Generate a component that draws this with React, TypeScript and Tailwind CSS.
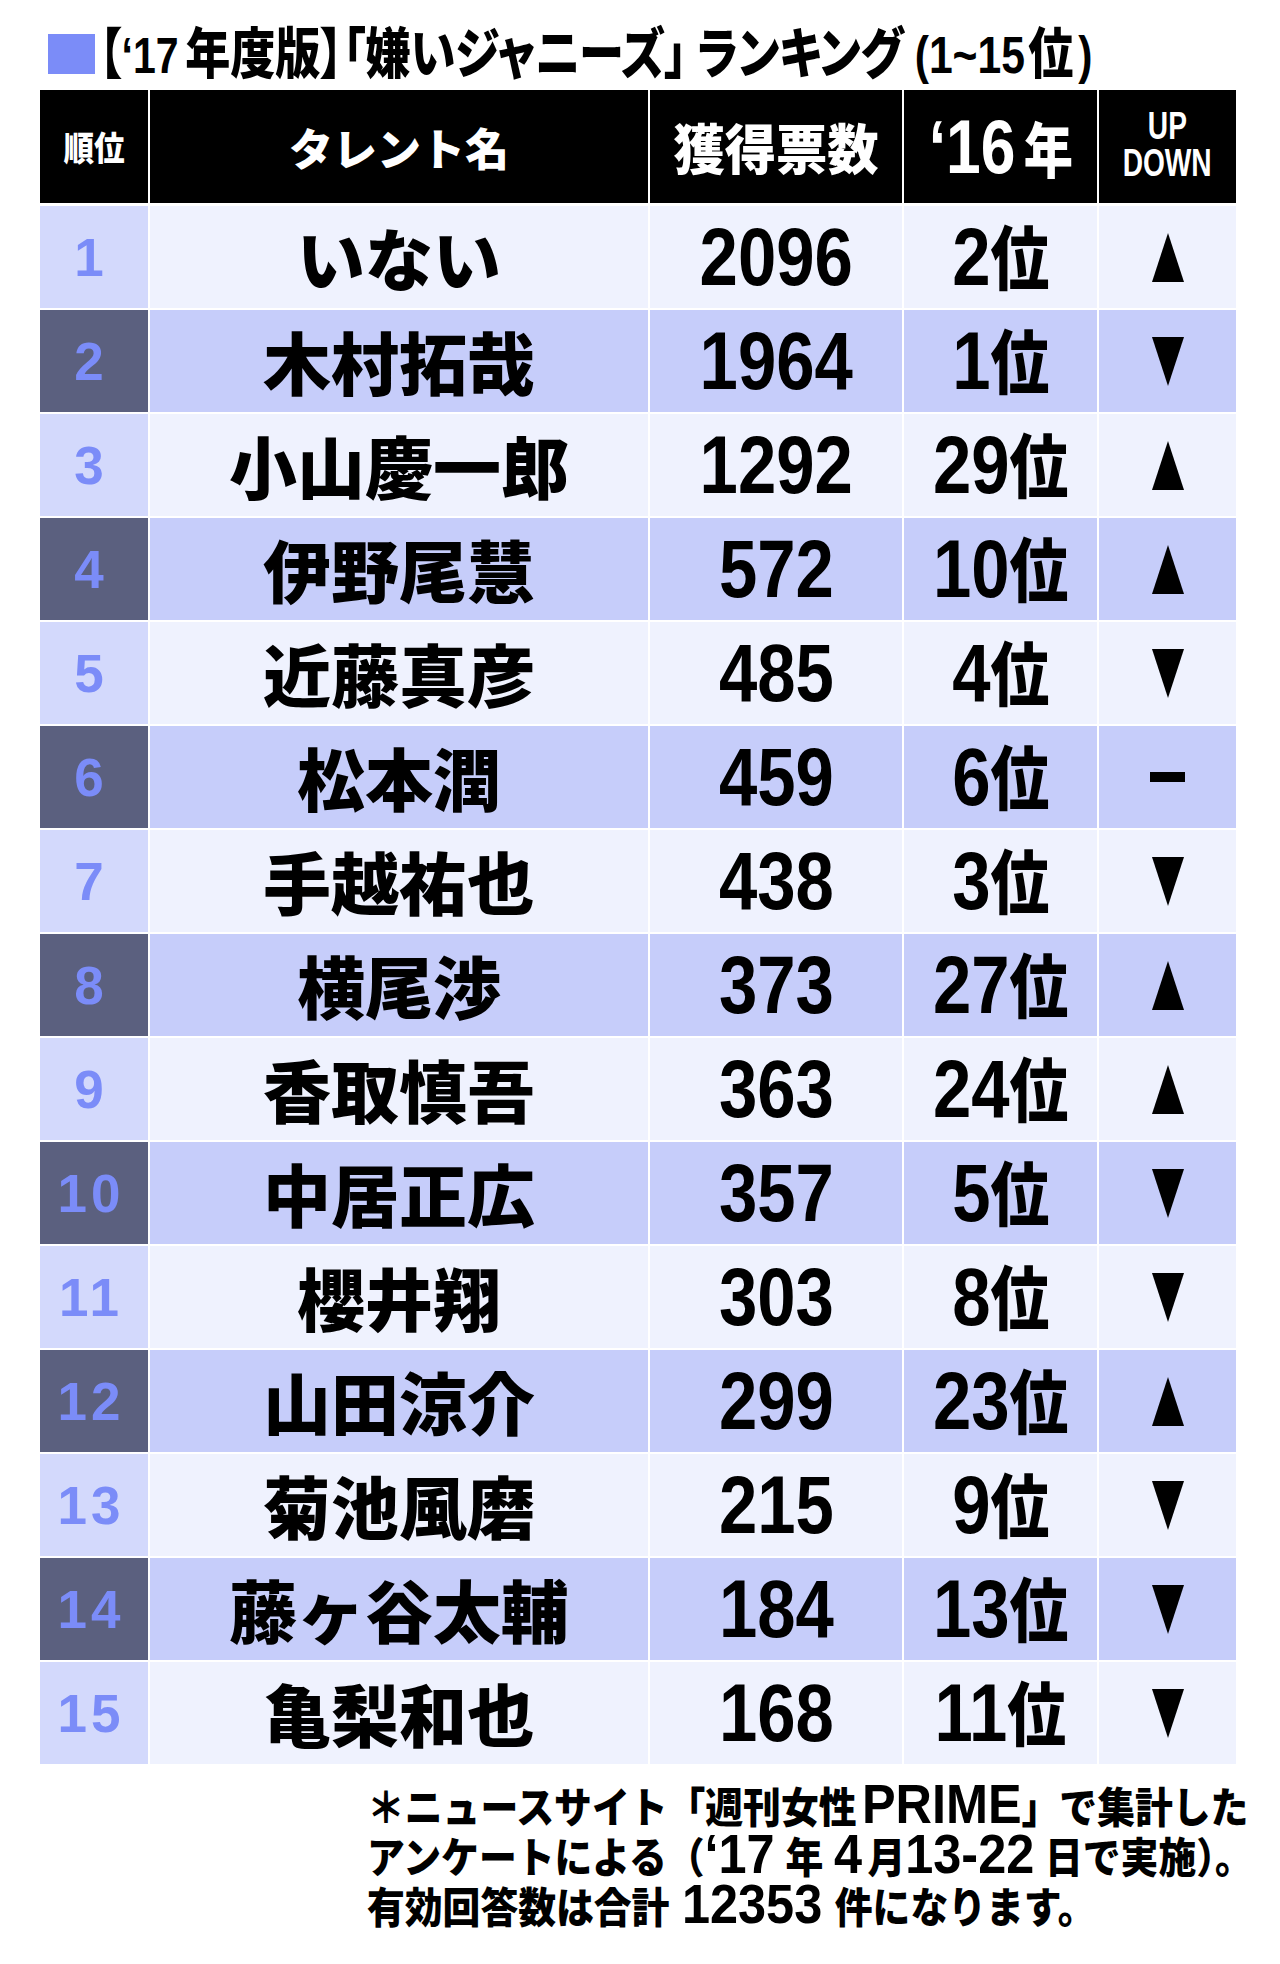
const jp = "font-['Noto_Sans_CJK_JP',sans-serif] font-black";
const lat = "font-['Liberation_Sans',sans-serif] font-bold";
const palt = "[font-feature-settings:'palt']";

type Move = "up" | "down" | "same";

const rows: { name: string; votes: string; prev: string; move: Move }[] = [
  { name: "いない", votes: "2096", prev: "2", move: "up" },
  { name: "木村拓哉", votes: "1964", prev: "1", move: "down" },
  { name: "小山慶一郎", votes: "1292", prev: "29", move: "up" },
  { name: "伊野尾慧", votes: "572", prev: "10", move: "up" },
  { name: "近藤真彦", votes: "485", prev: "4", move: "down" },
  { name: "松本潤", votes: "459", prev: "6", move: "same" },
  { name: "手越祐也", votes: "438", prev: "3", move: "down" },
  { name: "横尾渉", votes: "373", prev: "27", move: "up" },
  { name: "香取慎吾", votes: "363", prev: "24", move: "up" },
  { name: "中居正広", votes: "357", prev: "5", move: "down" },
  { name: "櫻井翔", votes: "303", prev: "8", move: "down" },
  { name: "山田涼介", votes: "299", prev: "23", move: "up" },
  { name: "菊池風磨", votes: "215", prev: "9", move: "down" },
  { name: "藤ヶ谷太輔", votes: "184", prev: "13", move: "down" },
  { name: "亀梨和也", votes: "168", prev: "11", move: "down" },
];

const cols = "grid grid-cols-[108px_498px_252px_193px_137px] gap-x-[2px]";

function Arrow({ move }: { move: Move }) {
  if (move === "same") return <div className="h-[10px] w-[35px] bg-black" />;
  return (
    <svg width="32" height="49" viewBox="0 0 32 49">
      {move === "up" ? (
        <polygon points="16,0 32,49 0,49" fill="#000" />
      ) : (
        <polygon points="0,0 32,0 16,49" fill="#000" />
      )}
    </svg>
  );
}

function Row({ i, r }: { i: number; r: (typeof rows)[number] }) {
  const dark = i % 2 === 1;
  const bg = dark ? "bg-[#c6cdfa]" : "bg-[#eff2fe]";
  return (
    <div className={`${cols} h-[102px]`}>
      <div
        className={`flex items-center justify-center pr-[6px] ${dark ? "bg-[#5b607f]" : "bg-[#d3d9fc]"}`}
      >
        <span className={`${lat} text-[53px] leading-none tracking-[4px] text-[#7b8cf8]`}>
          {i + 1}
        </span>
      </div>
      <div className={`flex items-center justify-center ${bg}`}>
        <span className={`${jp} text-[68px] leading-none text-black`}>{r.name}</span>
      </div>
      <div className={`flex items-center justify-center ${bg}`}>
        <span className={`${lat} inline-block scale-x-[0.84] text-[82px] leading-none text-black`}>
          {r.votes}
        </span>
      </div>
      <div className={`flex items-center justify-center ${bg}`}>
        <span className="inline-flex scale-x-[0.84] items-baseline text-black">
          <span className={`${lat} text-[82px] leading-none`}>{r.prev}</span>
          <span className={`${jp} text-[70px] leading-none`}>位</span>
        </span>
      </div>
      <div className={`flex items-center justify-center ${bg}`}>
        <Arrow move={r.move} />
      </div>
    </div>
  );
}

export default function App() {
  return (
    <div className="h-[1964px] w-[1280px] overflow-hidden bg-white">
      <div className="flex h-[90px] items-center pl-[48px] pt-[12px]">
        <div className="mt-[6px] h-[40px] w-[47px] shrink-0 bg-[#7b8cf8]" />
        <span
          className={`${jp} ${palt} ml-[4px] inline-flex origin-left scale-x-[0.82] items-baseline whitespace-nowrap text-[55px] leading-none text-black`}
        >
          <span>【</span>
          <span className={`${lat} text-[50px]`}>‘17</span>
          <span className="ml-[8px]">年度版】「嫌いジャニーズ」</span>
          <span className="ml-[12px]">ランキング</span>
          <span className={`${lat} ml-[14px] text-[52px]`}>(1~15</span>
          <span className="ml-[4px]">位</span>
          <span className={`${lat} ml-[6px] text-[52px]`}>)</span>
        </span>
      </div>

      <div className="ml-[40px] w-[1196px]">
        <div className={`${cols} h-[113px] text-white`}>
          <div className="flex items-center justify-center bg-black">
            <span className={`${jp} inline-block scale-x-[0.9] text-[34px] leading-none`}>順位</span>
          </div>
          <div className="flex items-center justify-center bg-black">
            <span className={`${jp} text-[44px] leading-none`}>タレント名</span>
          </div>
          <div className="flex items-center justify-center bg-black">
            <span className={`${jp} inline-block scale-x-[0.95] text-[54px] leading-none`}>獲得票数</span>
          </div>
          <div className="flex items-center justify-center bg-black">
            <span className="inline-flex scale-x-[0.82] items-baseline">
              <span className={`${lat} text-[76px] leading-none`}>‘16</span>
              <span className={`${jp} ml-[10px] text-[60px] leading-none`}>年</span>
            </span>
          </div>
          <div className={`${lat} flex flex-col items-center justify-center bg-black pb-[4px]`}>
            <span className="inline-block scale-x-[0.74] text-[38px] leading-[37px]">UP</span>
            <span className="inline-block scale-x-[0.74] text-[38px] leading-[37px]">DOWN</span>
          </div>
        </div>

        <div className="mt-[3px] flex flex-col gap-y-[2px]">
          {rows.map((r, i) => (
            <Row key={i} i={i} r={r} />
          ))}
        </div>
      </div>

      <div
        className={`${jp} ml-[367px] mt-[16px] inline-block origin-left scale-x-[0.9] whitespace-nowrap text-[42px] leading-[50px] text-black`}
      >
        <div>
          ＊ニュースサイト「週刊女性<span className={`${lat} ml-[6px] text-[56px] leading-[40px]`}>PRIME</span>」で集計した
        </div>
        <div>
          アンケートによる（<span className={`${lat} text-[56px] leading-[40px]`}>‘17</span>
          <span className="ml-[12px]">年</span>
          <span className={`${lat} ml-[12px] text-[56px] leading-[40px]`}>4</span>
          <span className="ml-[6px]">月</span>
          <span className={`${lat} text-[56px] leading-[40px]`}>13-22</span>
          <span className="ml-[12px]">日で実施）。</span>
        </div>
        <div>
          有効回答数は合計<span className={`${lat} mx-[14px] text-[56px] leading-[40px]`}>12353</span>件になります。
        </div>
      </div>
    </div>
  );
}
